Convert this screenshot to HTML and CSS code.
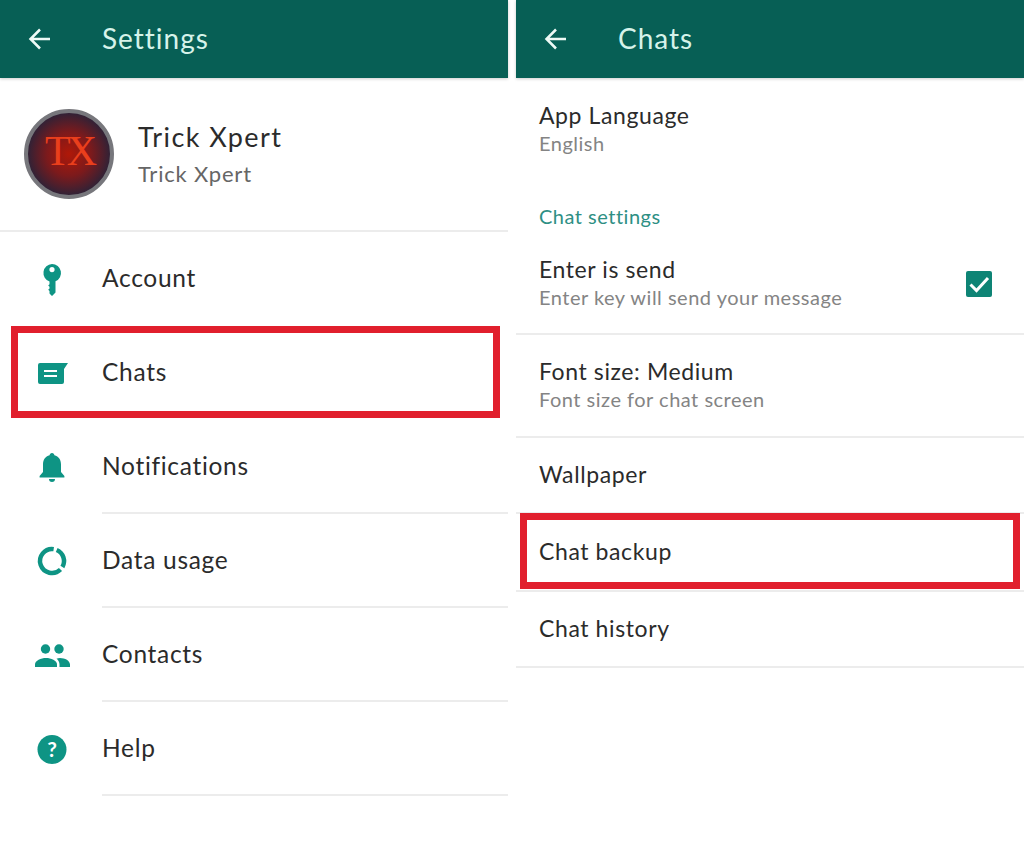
FILE: index.html
```html
<!DOCTYPE html>
<html lang="en">
<head>
    <meta charset="UTF-8">
    <meta name="viewport" content="width=device-width, initial-scale=1.0">
    <title>Settings</title>
    <link rel="stylesheet" href="styles.css">
</head>
<body>
    <div class="screens">
        <!-- Settings screen -->
        <section class="screen">
            <header class="app-bar">
                <svg class="back-arrow" viewBox="0 0 24 24"><path d="M22 12H3M12 2.500L2.500 12l9.500 9.500"/></svg>
                <h1 class="app-title">Settings</h1>
            </header>

            <div class="profile">
                <div class="avatar"><span class="avatar-text">TX</span></div>
                <div class="profile-text">
                    <div class="profile-name">Trick Xpert</div>
                    <div class="profile-status">Trick Xpert</div>
                </div>
            </div>

            <div class="menu-row">
                <svg class="menu-icon" viewBox="0 0 36 36">
                    <path fill-rule="evenodd" d="M18 3a9 9 0 0 1 3.500 17.300V31.500L18 35l-2.500-2.500V30l-1.300-1.300 1.300-1.300v-1.600l-1.300-1.300 1.300-1.300v-2.700A9 9 0 0 1 18 3zm0 3a2.600 2.600 0 1 0 0 5.200A2.600 2.600 0 0 0 18 6z"/>
                </svg>
                <span class="menu-label">Account</span>
            </div>
            <div class="menu-row marked">
                <svg class="menu-icon" viewBox="0 0 36 36">
                    <path d="M6 8h28l-4 6v13a2 2 0 0 1-2 2H6a2 2 0 0 1-2-2V10a2 2 0 0 1 2-2z"/>
                    <path class="icon-line" d="M10 16h13M10 21h13"/>
                </svg>
                <span class="menu-label">Chats</span>
                <div class="red-box"></div>
            </div>
            <div class="menu-row">
                <svg class="menu-icon" viewBox="0 0 36 36">
                    <path d="M18 4c1.400 0 2.400 1 2.400 2.300 4.400 1 6.600 4.700 6.600 9.200V23l3.400 4v1.500H5.600V27L9 23v-7.500c0-4.500 2.200-8.200 6.600-9.200C15.600 5 16.600 4 18 4z"/>
                    <path d="M15 30h6a3 3 0 0 1-6 0z"/>
                </svg>
                <span class="menu-label">Notifications</span>
            </div>
            <div class="menu-row">
                <svg class="menu-icon" viewBox="0 0 36 36">
                    <path class="icon-ring" d="M22.700 6.950A12 12 0 0 1 28.390 24"/>
                    <path class="icon-ring" d="M26.500 26.500A12 12 0 1 1 19.670 6.120"/>
                </svg>
                <span class="menu-label">Data usage</span>
            </div>
            <div class="menu-row">
                <svg class="menu-icon" viewBox="0 0 36 36">
                    <circle cx="11.500" cy="12" r="4.700"/>
                    <circle cx="25" cy="12" r="4.700"/>
                    <path d="M1 30v-2.500C1 23.500 7 21 12 21s11 2.500 11 6.500V30z"/>
                    <path d="M25.500 30v-2.500c0-2.500-1.200-4.500-3-5.800 1-.4 2.200-.7 3.500-.7 5 0 10 2.800 10 6.500V30z"/>
                </svg>
                <span class="menu-label">Contacts</span>
            </div>
            <div class="menu-row">
                <svg class="menu-icon" viewBox="0 0 36 36">
                    <circle cx="18" cy="18.500" r="14.500"/>
                    <text class="icon-mark" x="18" y="26">?</text>
                </svg>
                <span class="menu-label">Help</span>
            </div>
        </section>

        <!-- Chats screen -->
        <section class="screen">
            <header class="app-bar">
                <svg class="back-arrow" viewBox="0 0 24 24"><path d="M22 12H3M12 2.500L2.500 12l9.500 9.500"/></svg>
                <h1 class="app-title">Chats</h1>
            </header>

            <div class="setting-row tall no-line">
                <div class="setting-title">App Language</div>
                <div class="setting-sub">English</div>
            </div>

            <div class="section-label">Chat settings</div>

            <div class="setting-row tall split">
                <div>
                    <div class="setting-title">Enter is send</div>
                    <div class="setting-sub">Enter key will send your message</div>
                </div>
                <svg class="check-box" viewBox="0 0 26 26">
                    <rect width="26" height="26" rx="2"/>
                    <path d="M4.500 13.500l6 6L22 7"/>
                </svg>
            </div>
            <div class="setting-row tall">
                <div class="setting-title">Font size: Medium</div>
                <div class="setting-sub">Font size for chat screen</div>
            </div>
            <div class="setting-row short">
                <div class="setting-title">Wallpaper</div>
            </div>
            <div class="setting-row">
                <div class="setting-title">Chat backup</div>
                <div class="red-box backup-box"></div>
            </div>
            <div class="setting-row short">
                <div class="setting-title">Chat history</div>
            </div>
        </section>
    </div>
</body>
</html>
```

FILE: styles.css
```css
html, body {
    margin: 0;
    background-color: white;
}
body {
    font-family: Lato, "Liberation Sans", sans-serif;
    color: #2b2b2b;
}
.screens {
    display: flex;
    gap: 8px;
    height: 856px;
    overflow: hidden;
}
.screen {
    flex: 1;
    min-width: 0;
}

/* Header */
.app-bar {
    display: flex;
    align-items: center;
    height: 78px;
    background-color: #075f55;
    box-shadow: 0 1px 3px rgba(0, 0, 0, 0.2);
}
.back-arrow {
    width: 24px;
    height: 24px;
    margin-left: 28px;
    fill: none;
    stroke: #eefaf6;
    stroke-width: 2.500;
}
.app-title {
    margin: 0 0 3px 50px;
    font-size: 28px;
    font-weight: 400;
    letter-spacing: 1px;
    color: #d6f3ea;
}

/* Settings list */
.profile {
    display: flex;
    align-items: center;
    gap: 24px;
    height: 152px;
    padding-left: 24px;
    border-bottom: 2px solid #ececec;
}
.avatar {
    display: flex;
    align-items: center;
    justify-content: center;
    box-sizing: border-box;
    width: 90px;
    height: 90px;
    border: 4px solid #77777c;
    border-radius: 50%;
    background: radial-gradient(circle, #b01808 0%, #7c1a1c 38%, #2a2238 74%);
}
.avatar-text {
    margin-bottom: 6px;
    font-family: "Liberation Serif", serif;
    font-size: 42px;
    letter-spacing: -4px;
    color: #ea3f1c;
}
.profile-text {
    margin-bottom: 2px;
}
.profile-name {
    font-size: 27px;
    letter-spacing: 1.400px;
}
.profile-status {
    margin-top: 7px;
    font-size: 22px;
    letter-spacing: 0.800px;
    color: #666;
}
.menu-row {
    position: relative;
    display: flex;
    align-items: center;
    height: 94px;
}
.menu-row:nth-child(n+5):after {
    content: "";
    position: absolute;
    left: 102px;
    right: 0;
    bottom: 0;
    height: 2px;
    background-color: #ececec;
}
.menu-icon {
    flex: none;
    width: 36px;
    height: 36px;
    margin: 0 32px 0 34px;
    fill: #0e9484;
}
.icon-line {
    fill: none;
    stroke: white;
    stroke-width: 2;
}
.icon-ring {
    fill: none;
    stroke: #0e9484;
    stroke-width: 4.500;
}
.icon-mark {
    font-family: Lato, sans-serif;
    font-size: 21px;
    font-weight: 700;
    text-anchor: middle;
    fill: white;
}
.menu-label {
    margin-bottom: 4px;
    font-size: 24.500px;
    letter-spacing: 0.700px;
}
.red-box {
    position: absolute;
    left: 11px;
    right: 8px;
    top: 0;
    height: 92px;
    box-sizing: border-box;
    border: 7px solid #e11f2d;
}

/* Chats list */
.setting-row {
    position: relative;
    display: flex;
    flex-direction: column;
    justify-content: center;
    box-sizing: border-box;
    height: 78px;
    padding: 0 32px 3px 23px;
    border-bottom: 2px solid #ececec;
}
.setting-row.short {
    height: 76px;
}
.setting-row.tall {
    height: 102px;
}
.setting-row.tall + .setting-row.tall {
    height: 103px;
}
.setting-row.no-line {
    border-bottom: none;
}
.setting-row.split {
    flex-direction: row;
    align-items: center;
    justify-content: space-between;
}
.setting-title {
    font-size: 23px;
    letter-spacing: 0.600px;
}
.setting-sub {
    margin-top: 2px;
    font-size: 20px;
    letter-spacing: 0.500px;
    color: #848484;
}
.section-label {
    padding: 24px 0 5px 23px;
    font-size: 20px;
    letter-spacing: 0.500px;
    color: #2e8f84;
}
.check-box {
    width: 26px;
    height: 26px;
    margin-top: 4px;
}
.check-box rect {
    fill: #0e8475;
}
.check-box path {
    fill: none;
    stroke: white;
    stroke-width: 3;
}
.backup-box {
    left: 4px;
    right: 4px;
    top: -1px;
    height: 76px;
}
```
